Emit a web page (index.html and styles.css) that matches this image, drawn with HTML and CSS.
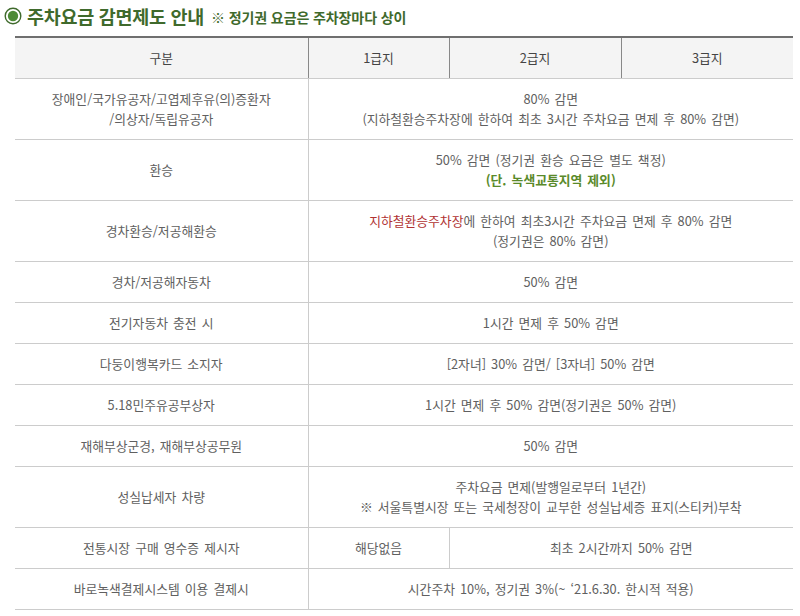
FILE: index.html
```html
<!DOCTYPE html>
<html lang="ko">
<head>
<meta charset="utf-8">
<title>주차요금 감면제도 안내</title>
<link rel="stylesheet" href="styles.css">
</head>
<body>
<div class="page">
  <h2 class="title">
    <svg class="bullet" width="18" height="18" viewBox="0 0 18 18" aria-hidden="true">
      <circle cx="9" cy="9" r="7.8" fill="none" stroke="#3f6a2c" stroke-width="1.4"/>
      <circle cx="9" cy="9" r="5.2" fill="#4d8a36"/>
    </svg>
    <span class="title-main">주차요금 감면제도 안내</span>
    <span class="title-sub">※ 정기권 요금은 주차장마다 상이</span>
  </h2>
  <table class="fee">
    <colgroup>
      <col class="c1"><col class="c2"><col class="c3"><col class="c4">
    </colgroup>
    <thead>
      <tr><th>구분</th><th>1급지</th><th>2급지</th><th>3급지</th></tr>
    </thead>
    <tbody>
      <tr><td>장애인/국가유공자/고엽제후유(의)증환자<br>/의상자/독립유공자</td><td colspan="3">80% 감면<br>(지하철환승주차장에 한하여 최초 3시간 주차요금 면제 후 80% 감면)</td></tr>
      <tr><td>환승</td><td colspan="3">50% 감면 (정기권 환승 요금은 별도 책정)<br><strong class="green">(단. 녹색교통지역 제외)</strong></td></tr>
      <tr><td>경차환승/저공해환승</td><td colspan="3"><span class="red">지하철환승주차장</span>에 한하여 최초3시간 주차요금 면제 후 80% 감면<br>(정기권은 80% 감면)</td></tr>
      <tr><td>경차/저공해자동차</td><td colspan="3">50% 감면</td></tr>
      <tr><td>전기자동차 충전 시</td><td colspan="3">1시간 면제 후 50% 감면</td></tr>
      <tr><td>다둥이행복카드 소지자</td><td colspan="3">[2자녀] 30% 감면/ [3자녀] 50% 감면</td></tr>
      <tr><td>5.18민주유공부상자</td><td colspan="3">1시간 면제 후 50% 감면(정기권은 50% 감면)</td></tr>
      <tr><td>재해부상군경, 재해부상공무원</td><td colspan="3">50% 감면</td></tr>
      <tr><td>성실납세자 차량</td><td colspan="3">주차요금 면제(발행일로부터 1년간)<br>※ 서울특별시장 또는 국세청장이 교부한 성실납세증 표지(스티커)부착</td></tr>
      <tr><td>전통시장 구매 영수증 제시자</td><td>해당없음</td><td colspan="2">최초 2시간까지 50% 감면</td></tr>
      <tr><td>바로녹색결제시스템 이용 결제시</td><td colspan="3">시간주차 10%, 정기권 3%(~ ‘21.6.30. 한시적 적용)</td></tr>
    </tbody>
  </table>
</div>
</body>
</html>
```
FILE: styles.css
```css
html, body {
  margin: 0;
  padding: 0;
  background: #ffffff;
}
body {
  font-family: "Noto Sans CJK KR", "Noto Sans", sans-serif;
  color: #555555;
}
.page {
  width: 800px;
}
.title {
  margin: 0;
  height: 36px;
  display: flex;
  align-items: center;
  padding-left: 4px;
  font-weight: normal;
  color: #3f6a2c;
}
.bullet {
  flex: none;
  margin-right: 5px;
  margin-top: -4px;
}
.title-main {
  font-size: 18.5px;
  font-weight: 700;
  letter-spacing: -0.3px;
  margin-top: -5px;
}
.title-sub {
  font-size: 14px;
  font-weight: 700;
  margin-left: 7px;
  margin-top: -3px;
  letter-spacing: -0.1px;
}
.fee {
  margin-left: 15px;
  width: 778px;
  border-collapse: collapse;
  table-layout: fixed;
  font-size: 12.8px;
  word-spacing: 1.5px;
}
.c1 { width: 293px; }
.c2 { width: 141px; }
.c3 { width: 172px; }
.c4 { width: 172px; }
.fee th,
.fee td {
  text-align: center;
  line-height: 20px;
  padding: 10px 0;
  border-bottom: 1px solid #cccccc;
  border-left: 1px solid #cccccc;
}
.fee th:first-child,
.fee td:first-child {
  border-left: none;
}
.fee thead th {
  background: #f4f4f4;
  border-top: 2px solid #6f6f6f;
  border-left-color: #888888;
  border-bottom: 1px solid #cccccc;
  font-weight: normal;
  color: #444444;
}
.fee thead th:first-child {
  border-left: none;
}
.fee td {
  color: #606060;
}
.red {
  color: #b03232;
}
.green {
  color: #5a8a2a;
  font-weight: 700;
}
```
